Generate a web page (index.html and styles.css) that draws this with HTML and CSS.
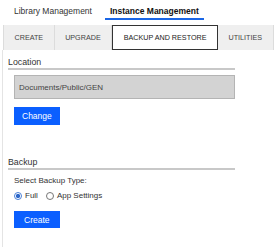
FILE: index.html
```html
<!DOCTYPE html>
<html lang="en">

<head>
    <meta charset="UTF-8">
    <meta name="viewport" content="width=device-width, initial-scale=1.0">
    <title>Instance Management</title>
    <link rel="stylesheet" href="styles.css">
</head>

<body>
    <div class="topnav">
        <div class="nav-item">Library Management</div>
        <div class="nav-item active">Instance Management</div>
    </div>

    <div class="tabs">
        <div class="tab">CREATE</div>
        <div class="tab">UPGRADE</div>
        <div class="tab selected">BACKUP AND RESTORE</div>
        <div class="tab">UTILITIES</div>
    </div>

    <div class="panel">
        <div class="section">
            <div class="section-title">Location</div>
            <div class="section-body">
                <div class="path-box">Documents/Public/GEN</div>
                <button class="button">Change</button>
            </div>
        </div>

        <div class="section backup">
            <div class="section-title">Backup</div>
            <div class="section-body">
                <div class="field-label">Select Backup Type:</div>
                <div class="radio-row">
                    <label><input type="radio" name="type" checked> Full</label>
                    <label><input type="radio" name="type"> App Settings</label>
                </div>
                <button class="button create">Create</button>
            </div>
        </div>
    </div>
</body>

</html>
```

FILE: styles.css
```css
body {
    margin: 0;
    background: #fff;
    color: #333;
    font-family: "Liberation Sans", Arial, sans-serif;
}

.topnav {
    display: flex;
    gap: 8px;
    padding: 6px 0 0 9px;
}

.nav-item {
    font-size: 8.5px;
    line-height: 10px;
    padding: 0 5px 2px;
    border-bottom: 2px solid transparent;
    color: #333;
}

.nav-item.active {
    font-weight: bold;
    color: #111;
    border-bottom-color: #1a66e6;
}

.tabs {
    display: flex;
    margin: 5px 0 0 3px;
    height: 25px;
}

.tab {
    display: flex;
    align-items: center;
    padding: 0 10.5px;
    background: #efefef;
    border-right: 1px solid #dcdcdc;
    font-size: 7.2px;
    color: #444;
}

.tab:first-child {
    border-left: 1px solid #dcdcdc;
}

.tab.selected {
    background: #fff;
    border: 1px solid #333;
    color: #222;
}

.panel {
    box-sizing: border-box;
    margin-left: 2px;
    border-left: 1px solid #e4e4e4;
    padding: 7px 0 0 5px;
    height: 197px;
}

.section {
    width: 227px;
}

.section-title {
    font-size: 8.8px;
    line-height: 11px;
    color: #333;
    border-bottom: 2px solid #c8c8c8;
}

.section-body {
    display: flex;
    flex-direction: column;
    align-items: flex-start;
    padding-left: 6px;
}

.path-box {
    box-sizing: border-box;
    width: 221px;
    height: 24px;
    margin-top: 5px;
    padding-left: 4px;
    display: flex;
    align-items: center;
    background: #d3d3d3;
    border: 1px solid #b4b4b4;
    font-size: 8px;
    color: #444;
}

.button {
    margin-top: 8px;
    height: 18px;
    padding: 0 8px;
    border: none;
    background: #0b5fff;
    color: #fff;
    font-family: inherit;
    font-size: 8.5px;
}

.backup {
    margin-top: 32px;
}

.field-label {
    margin-top: 6px;
    font-size: 8px;
    line-height: 10px;
}

.radio-row {
    display: flex;
    gap: 8px;
    margin-top: 5px;
    font-size: 8px;
    line-height: 10px;
}

.radio-row label {
    display: flex;
    align-items: center;
    gap: 3px;
}

.radio-row input {
    appearance: none;
    margin: 0;
    width: 8px;
    height: 8px;
    border: 1px solid #777;
    border-radius: 50%;
    background: #fff;
}

.radio-row input:checked {
    border-color: #4a7fd6;
    background: radial-gradient(circle, #2c67c9 0 45%, #fff 55%);
}

.button.create {
    margin-top: 10px;
    height: 17px;
    padding: 0 10px;
}
```
